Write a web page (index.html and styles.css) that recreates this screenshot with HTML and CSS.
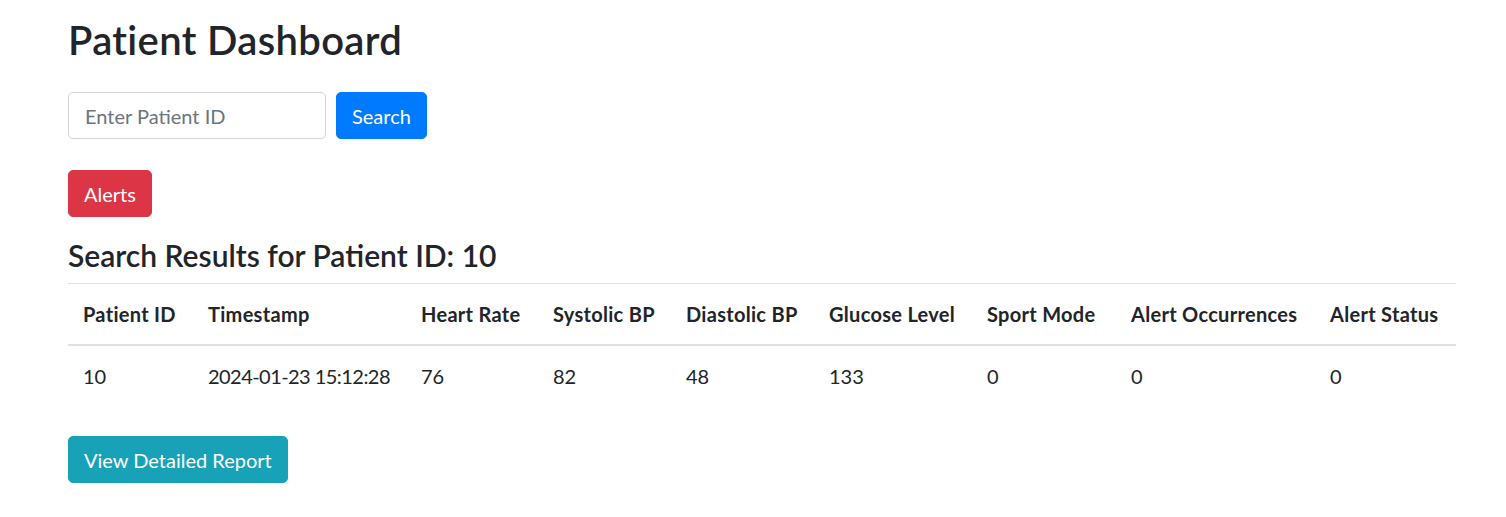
FILE: index.html
```html
<!DOCTYPE html>
<html lang="en">
<head>
<meta charset="utf-8">
<title>Patient Dashboard</title>
<link rel="stylesheet" href="styles.css">
</head>
<body>
<div class="page">
  <h2 class="title">Patient Dashboard</h2>
  <form class="search-form">
    <input class="field" type="text" placeholder="Enter Patient ID">
    <button class="btn btn-primary" type="button">Search</button>
  </form>
  <div class="alerts-row">
    <button class="btn btn-danger" type="button">Alerts</button>
  </div>
  <h4 class="results-title">Search Results for Patient ID: 10</h4>
  <table class="data-table">
    <colgroup>
      <col class="c1"><col class="c2"><col class="c3"><col class="c4"><col class="c5"><col class="c6"><col class="c7"><col class="c8"><col class="c9">
    </colgroup>
    <thead>
      <tr>
        <th>Patient ID</th>
        <th>Timestamp</th>
        <th>Heart Rate</th>
        <th>Systolic BP</th>
        <th>Diastolic BP</th>
        <th>Glucose Level</th>
        <th>Sport Mode</th>
        <th>Alert Occurrences</th>
        <th>Alert Status</th>
      </tr>
    </thead>
    <tbody>
      <tr>
        <td>10</td>
        <td class="ts">2024-01-23 15:12:28</td>
        <td>76</td>
        <td>82</td>
        <td>48</td>
        <td>133</td>
        <td>0</td>
        <td>0</td>
        <td>0</td>
      </tr>
    </tbody>
  </table>
  <div class="report-row">
    <button class="btn btn-info" type="button">View Detailed Report</button>
  </div>
</div>
</body>
</html>
```
FILE: styles.css
```css
* { box-sizing: border-box; }

html, body {
  margin: 0;
  padding: 0;
  background: #ffffff;
}

body {
  font-family: Lato, "Open Sans", sans-serif;
  font-size: 20px;
  line-height: 30px;
  color: #212529;
}

.page {
  padding: 16px 50px 0 68px;
}

.title {
  margin: 0 0 28px 0;
  font-size: 40px;
  line-height: 48px;
  font-weight: 600;
  letter-spacing: 0.35px;
}

.search-form {
  display: flex;
  align-items: center;
  gap: 10px;
  margin: 0;
}

.field {
  width: 258px;
  height: 47px;
  padding: 7px 16px;
  font-family: inherit;
  font-size: 20px;
  color: #495057;
  border: 1px solid #ced4da;
  border-radius: 5px;
  outline: none;
}

.field::placeholder {
  color: #6c757d;
}

.btn {
  height: 47px;
  padding: 7px 15px;
  font-family: inherit;
  font-size: 20px;
  line-height: 30px;
  color: #ffffff;
  border: 1px solid transparent;
  border-radius: 5px;
  cursor: pointer;
}

.btn-primary { background: #007bff; border-color: #007bff; }
.btn-danger { background: #dc3545; border-color: #dc3545; }
.btn-info { background: #17a2b8; border-color: #17a2b8; }

.alerts-row {
  margin-top: 31px;
  display: flex;
}

.results-title {
  margin: 20px 0 10px 0;
  font-size: 30px;
  line-height: 36px;
  font-weight: 600;
}

.data-table {
  width: 1388px;
  table-layout: fixed;
  border-collapse: collapse;
}

.c1 { width: 125px; }
.c2 { width: 213px; }
.c3 { width: 132px; }
.c4 { width: 133px; }
.c5 { width: 143px; }
.c6 { width: 158px; }
.c7 { width: 144px; }
.c8 { width: 199px; }
.c9 { width: 141px; }

.data-table th,
.data-table td {
  padding: 15px;
  text-align: left;
  vertical-align: top;
  border-top: 1px solid #dee2e6;
  white-space: nowrap;
}

.data-table th {
  font-weight: 700;
  letter-spacing: 0.3px;
  border-bottom: 2px solid #dee2e6;
}

.data-table td.ts {
  letter-spacing: -0.55px;
}

.report-row {
  margin-top: 30px;
  display: flex;
}
```
